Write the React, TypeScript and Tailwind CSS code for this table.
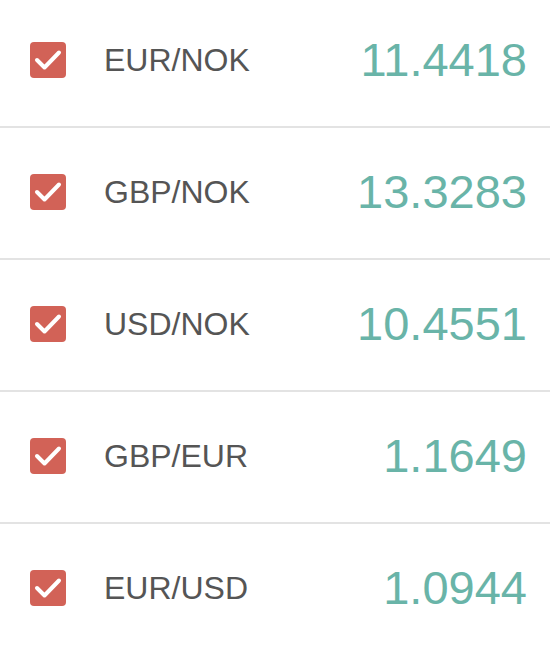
const rates = [
  { pair: "EUR/NOK", value: "11.4418" },
  { pair: "GBP/NOK", value: "13.3283" },
  { pair: "USD/NOK", value: "10.4551" },
  { pair: "GBP/EUR", value: "1.1649" },
  { pair: "EUR/USD", value: "1.0944" },
];

const CheckBox = () => (
  <div className="w-[36px] h-[36px] rounded-[4px] bg-[#d26257] flex items-center justify-center shrink-0">
    <svg width="36" height="36" viewBox="0 0 36 36" fill="none">
      <polyline
        points="7,18 14.5,25.5 29,10.5"
        stroke="white"
        strokeWidth="4"
        strokeLinecap="round"
        strokeLinejoin="round"
      />
    </svg>
  </div>
);

export default function App() {
  return (
    <div className="w-[550px] h-[650px] overflow-hidden bg-white font-[family-name:'Liberation_Sans',Arial,sans-serif]">
      {/* list of currency rows */}
      <div className="-mt-[4px]">
        {rates.map((rate) => (
          <div
            key={rate.pair}
            className="h-[132px] flex items-center pb-[3px] pl-[30px] pr-[23px] border-b-2 border-[#e3e3e3]"
          >
            <CheckBox />
            <span className="ml-[38px] text-[32px] leading-none text-[#555555]">
              {rate.pair}
            </span>
            <span className="ml-auto text-[47px] leading-none text-[#69b4a8]">
              {rate.value}
            </span>
          </div>
        ))}
      </div>
    </div>
  );
}
